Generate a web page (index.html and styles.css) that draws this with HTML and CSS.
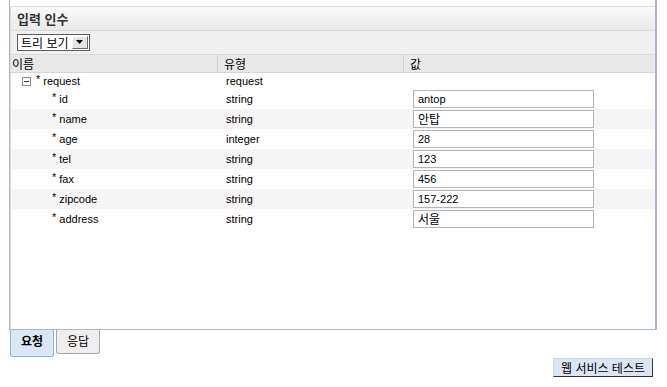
FILE: index.html
```html
<!DOCTYPE html>
<html lang="ko">
<head>
<meta charset="utf-8">
<link rel="stylesheet" href="styles.css">
</head>
<body>
<div class="panel">
  <div class="topgap"></div>
  <div class="inner">
    <div class="title">입력 인수</div>
    <div class="toolbar">
      <div class="select"><span class="select-text">트리 보기</span><span class="select-btn"><svg width="9" height="5" viewBox="0 0 9 5"><path d="M1 0h7L4.5 4z" fill="#000"/></svg></span></div>
    </div>
    <div class="grid head">
      <div class="hc c1">이름</div>
      <div class="hc c2">유형</div>
      <div class="hc c3">값</div>
    </div>
    <div class="grid row parent">
      <div class="c1 name"><span class="toggle"><svg width="9" height="9" viewBox="0 0 9 9"><rect x="0.5" y="0.5" width="8" height="8" fill="#fff" stroke="#8c8c8c"/><path d="M2 4.5h5" stroke="#333"/></svg></span><span class="star">*</span>request</div>
      <div class="c2 type">request</div>
      <div class="c3"></div>
    </div>
    <div class="grid row">
      <div class="c1 name child"><span class="star">*</span>id</div>
      <div class="c2 type">string</div>
      <div class="c3 val"><div class="input">antop</div></div>
    </div>
    <div class="grid row alt">
      <div class="c1 name child"><span class="star">*</span>name</div>
      <div class="c2 type">string</div>
      <div class="c3 val"><div class="input ko">안탑</div></div>
    </div>
    <div class="grid row">
      <div class="c1 name child"><span class="star">*</span>age</div>
      <div class="c2 type">integer</div>
      <div class="c3 val"><div class="input">28</div></div>
    </div>
    <div class="grid row alt">
      <div class="c1 name child"><span class="star">*</span>tel</div>
      <div class="c2 type">string</div>
      <div class="c3 val"><div class="input">123</div></div>
    </div>
    <div class="grid row">
      <div class="c1 name child"><span class="star">*</span>fax</div>
      <div class="c2 type">string</div>
      <div class="c3 val"><div class="input">456</div></div>
    </div>
    <div class="grid row alt">
      <div class="c1 name child"><span class="star">*</span>zipcode</div>
      <div class="c2 type">string</div>
      <div class="c3 val"><div class="input">157-222</div></div>
    </div>
    <div class="grid row">
      <div class="c1 name child"><span class="star">*</span>address</div>
      <div class="c2 type">string</div>
      <div class="c3 val"><div class="input ko">서울</div></div>
    </div>
  </div>
</div>
<div class="tabs">
  <div class="tab active">요청</div>
  <div class="tab">응답</div>
</div>
<div class="actions">
  <div class="btn">웹 서비스 테스트</div>
</div>
</body>
</html>
```

FILE: styles.css
```css
html, body {
  margin: 0;
  padding: 0;
  background: #fff;
}
body {
  width: 667px;
  height: 387px;
  overflow: hidden;
  font-family: "Liberation Sans", "Noto Sans CJK KR", sans-serif;
  font-size: 11px;
  color: #000;
}
.panel {
  margin-left: 9px;
  width: 645px;
  height: 329px;
  border-left: 1px solid #a6b8cf;
  border-right: 2px solid #a6b8cf;
  border-bottom: 1px solid #a6b8cf;
  display: flex;
  flex-direction: column;
}
.topgap {
  height: 6px;
  flex: none;
}
.inner {
  flex: 1;
  border-left: 1px solid #dcdcdc;
  border-top: 1px solid #dcdcdc;
  display: flex;
  flex-direction: column;
}
.title {
  height: 23px;
  line-height: 23px;
  padding-left: 6px;
  font-family: "Noto Sans CJK KR", sans-serif;
  font-size: 13px;
  font-weight: bold;
  color: #333;
  background: linear-gradient(#fafafa, #e9e9e9);
  border-bottom: 1px solid #dadada;
}
.toolbar {
  height: 23px;
  background: #f0f0f0;
  border-bottom: 1px solid #dcdcdc;
  display: flex;
  align-items: center;
  padding-left: 6px;
}
.select {
  display: flex;
  align-items: center;
  height: 15px;
  border: 1px solid #5e5e5e;
  background: #fff;
  padding: 0 1px 0 3px;
  gap: 3px;
}
.select-text {
  font-family: "Noto Sans CJK KR", sans-serif;
  font-size: 12px;
  line-height: 15px;
}
.select-btn {
  width: 14px;
  height: 11px;
  background: #e4e4e4;
  border: 1px solid;
  border-color: #fff #6a6a6a #6a6a6a #fff;
  display: flex;
  align-items: center;
  justify-content: center;
}
.grid {
  display: grid;
  grid-template-columns: 206px 186px 1fr;
}
.head {
  height: 17px;
  background: #e8e8e8;
  border-bottom: 1px solid #d6d6d6;
}
.hc {
  font-family: "Noto Sans CJK KR", sans-serif;
  font-size: 12px;
  line-height: 17px;
}
.head .c1 { padding-left: 1px; }
.head .c2 { padding-left: 6px; border-left: 1px solid #d4d4d4; }
.head .c3 { padding-left: 6px; border-left: 1px solid #d4d4d4; }
.row {
  height: 20px;
  align-items: center;
}
.row.parent {
  height: 16px;
}
.row.alt {
  background: #f5f5f5;
}
.name {
  display: flex;
  align-items: center;
  padding-left: 11px;
}
.name.child {
  padding-left: 41px;
}
.toggle {
  display: flex;
  width: 9px;
  height: 9px;
  margin-right: 5px;
}
.star {
  font-size: 11px;
  margin-right: 3px;
  position: relative;
  top: -2px;
}
.type {
  padding-left: 9px;
}
.val {
  padding-left: 10px;
}
.input {
  width: 175px;
  height: 16px;
  line-height: 16px;
  border: 1px solid #b4b4b4;
  padding-left: 4px;
  box-sizing: content-box;
  font-size: 11px;
  background: #fff;
}
.input.ko {
  font-family: "Noto Sans CJK KR", sans-serif;
  font-size: 12px;
}
.tabs {
  display: flex;
  gap: 2px;
  padding-left: 10px;
  height: 28px;
}
.tab {
  width: 42px;
  height: 23px;
  line-height: 22px;
  text-align: center;
  font-family: "Noto Sans CJK KR", sans-serif;
  font-size: 12px;
  background: #eeeeee;
  border: 1px solid #a8a8a8;
  border-top: none;
  border-radius: 0 0 3px 3px;
}
.tab.active {
  height: 26px;
  background: linear-gradient(#d9e6f4, #dbe7f5);
  border-color: #98b0cc;
  font-weight: bold;
}
.actions {
  display: flex;
  justify-content: flex-end;
  padding-right: 14px;
}
.btn {
  height: 17px;
  line-height: 17px;
  width: 98px;
  text-align: center;
  font-family: "Noto Sans CJK KR", sans-serif;
  font-size: 12px;
  background: #dce6f2;
  border: 1px solid;
  border-color: #c8d4e4 #333 #333 #c8d4e4;
}
```
